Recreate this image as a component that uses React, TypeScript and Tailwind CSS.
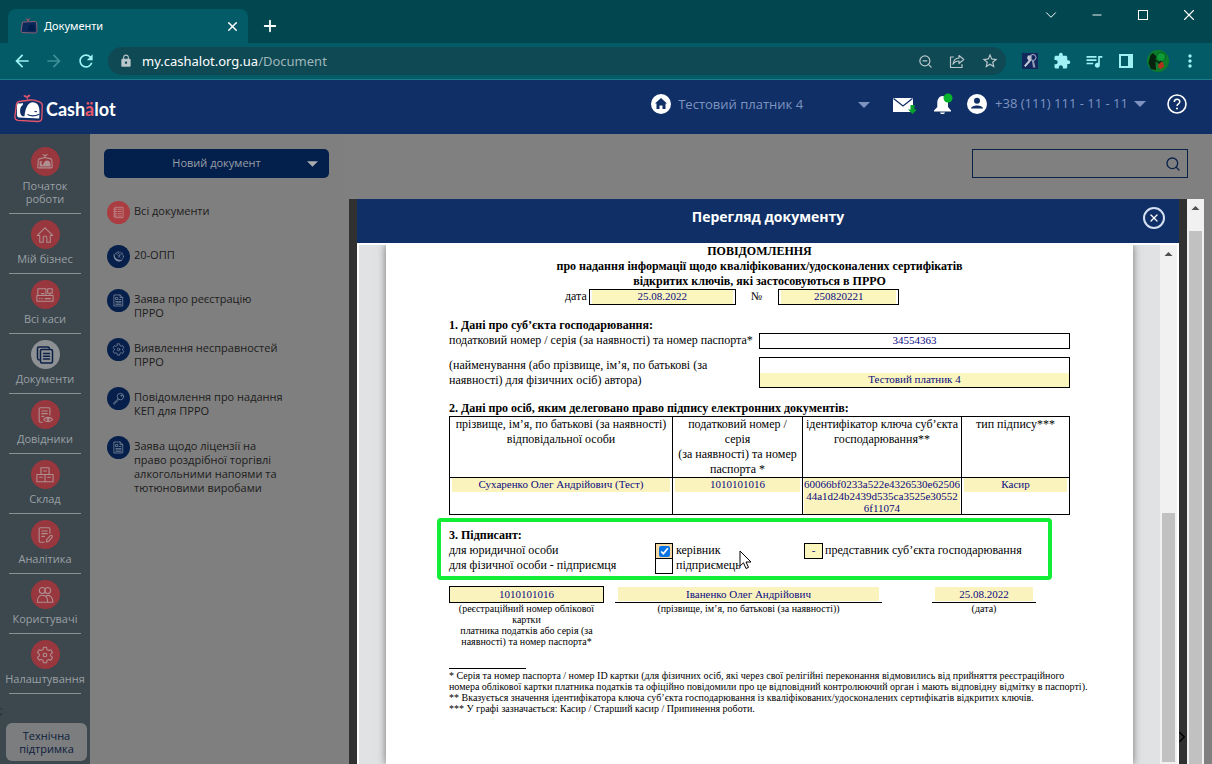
import React from "react";
import { Search, X, Plus, Minus, ChevronDown, ChevronRight, ZoomOut } from "lucide-react";
import {
  MdArrowBack,
  MdArrowForward,
  MdRefresh,
  MdExtension,
  MdQueueMusic,
  MdMoreVert,
  MdLock,
  MdStarBorder,
} from "react-icons/md";

type IconProps = { className?: string };

const line = {
  fill: "none",
  stroke: "currentColor",
  strokeWidth: 1.2,
  strokeLinecap: "round" as const,
  strokeLinejoin: "round" as const,
};

function WhaleMark({ className }: IconProps) {
  return (
    <svg viewBox="0 0 30 30" className={className} aria-hidden="true">
      <path
        d="M5 7.500Q2.800 7.800 2.500 10L.9 22.500Q.7 26 4 26.300L24 27.500Q27.500 27.600 27.800 24.500L28.300 11.500Q28.200 8.700 25.500 7.800L21 6.300Q19 5.700 16.500 6Z"
        fill="none"
        stroke="#e8566b"
        strokeWidth="1.300"
      />
      <path d="M12.800 5.800C13 4.500 12.900 4 12.600 3.400C11.300 3.600 9.800 2.900 9.400 1.500C11.200 1 12.500 1.600 13 2.600C13.300 1.200 14.500.3 16.300.8C16.200 2.500 15 3.300 13.900 3.400L13.800 5.800Z" fill="#e8566b" />
      <path
        d="M3 13C3.200 11 3 9.300 4.400 9.200C5.700 9.800 7 9.600 8.300 9C9.500 9 9 11.500 7.400 12.200C6 14 5.800 17 6.500 20C7.600 22.500 9.500 22.600 10.500 22C11.500 13 14.500 8.500 18.500 8.300C23.500 8.500 25.500 12 25.500 17.500L25.200 24.500L5 23.500Q3 23.400 2.900 21Z"
        fill="#ffffff"
      />
      <path d="M13.500 20.500C17 22.500 22 21.800 25.300 20.300M20.500 17.500L23 17.700" fill="none" stroke="#0f2f66" strokeWidth="1.100" />
    </svg>
  );
}

function WhaleSmall({ className }: IconProps) {
  return (
    <svg viewBox="0 0 20 20" className={className} aria-hidden="true">
      <g {...line}>
        <path d="M3.500 6.500L10 5L16.500 6.500Q17.500 7 17.600 8L18 15Q18 16.500 16.500 16.500H3Q1.800 16.500 2 15L2.500 8Q2.600 6.800 3.500 6.500Z" />
        <path d="M10 4.800V3M10 3L7.800 1.800M10 3L12.300 1.600" />
      </g>
      <path d="M4 15V9.500L6.500 8.500L6 11.500L7.500 14C8.500 10 10 8.200 12.500 8.200C15.500 8.500 16.300 11 16.300 15Z" fill="currentColor" />
    </svg>
  );
}

function HomeLine({ className }: IconProps) {
  return (
    <svg viewBox="0 0 20 20" className={className} aria-hidden="true">
      <path {...line} d="M1.500 10.500L10 2L18.500 10.500H15.800V18H12V13C12 10.500 8 10.500 8 13V18H4.200V10.500Z" />
    </svg>
  );
}

function CashDesk({ className }: IconProps) {
  return (
    <svg viewBox="0 0 20 20" className={className} aria-hidden="true">
      <path {...line} d="M2 3H11V10.500H2ZM13 3H18V8H13ZM15.500 8V10.500M1 10.500H19V17H1ZM6 8.500H9M4 14H4.500M6.500 14H7M10 14H16" />
    </svg>
  );
}

function DocsStack({ className }: IconProps) {
  return (
    <svg viewBox="0 0 20 20" className={className} aria-hidden="true">
      <path {...line} strokeWidth={1.5} d="M4 15C2.800 14.500 2.500 14 2.500 13V3.500C2.500 2.500 3 2 4 2H12.500C13.500 2 14 2.500 14.300 3M6.500 4.500H16C17 4.500 17.500 5 17.500 6V16.500C17.500 17.500 17 18 16 18H7C6 18 5.500 17.500 5.500 16.500V5.500C5.500 5 6 4.500 6.500 4.500ZM8.500 8.500H14.500M8.500 11.300H14.500M8.500 14H14.500" />
    </svg>
  );
}

function DocEye({ className }: IconProps) {
  return (
    <svg viewBox="0 0 20 20" className={className} aria-hidden="true">
      <path {...line} d="M15.500 10V3.500C15.500 2.500 15 2 14 2H5C4 2 3.500 2.500 3.500 3.500V16.500C3.500 17.500 4 18 5 18H7M6.500 5.500H12.500M6.500 8.500H12.500M6.500 11.500H8.500M8.500 15C10.500 11.800 16 11.800 18.500 15C16 18.200 10.500 18.200 8.500 15Z" />
      <circle {...line} cx="13.500" cy="15" r="1" />
    </svg>
  );
}

function Boxes({ className }: IconProps) {
  return (
    <svg viewBox="0 0 20 20" className={className} aria-hidden="true">
      <path {...line} d="M5.500 2H14.500V9.500H5.500ZM1 9.500H10V17.500H1ZM10 9.500H19V17.500H10ZM8.500 5.500H11.500M4 12.500H7M13 12.500H16" />
    </svg>
  );
}

function DocPen({ className }: IconProps) {
  return (
    <svg viewBox="0 0 20 20" className={className} aria-hidden="true">
      <path {...line} d="M15.500 8V3.500C15.500 2.500 15 2 14 2H5C4 2 3.500 2.500 3.500 3.500V16.500C3.500 17.500 4 18 5 18H9M6.500 5.500H12.500M6.500 8.500H12.500M6.500 11.500H9.500M11.500 17.800L12 14.800L16.300 10.500C17.500 9.800 18.800 11.300 18 12.400L14 17Z" />
    </svg>
  );
}

function Users({ className }: IconProps) {
  return (
    <svg viewBox="0 0 20 20" className={className} aria-hidden="true">
      <g {...line}>
        <circle cx="7" cy="5" r="3.300" />
        <circle cx="13" cy="5" r="3.300" />
        <path d="M1.500 18C1.500 13 3.500 10.300 7 10.300C11 10.300 13 13 13 18ZM11 11C15.500 9 18.800 12.500 18.800 18H13" />
      </g>
    </svg>
  );
}

function Gear({ className }: IconProps) {
  return (
    <svg viewBox="0 0 20 20" className={className} aria-hidden="true">
      <path {...line} d="M8.300 1.300H11.700L12.200 4L14 5L16.500 4.100L18.300 7.300L16.300 9V11L18.300 12.700L16.500 15.900L14 15L12.200 16L11.700 18.700H8.300L7.800 16L6 15L3.500 15.900L1.700 12.700L3.700 11V9L1.700 7.300L3.500 4.100L6 5L7.800 4Z" />
      <circle {...line} cx="10" cy="10" r="2" />
    </svg>
  );
}

function FormList({ className }: IconProps) {
  return (
    <svg viewBox="0 0 20 20" className={className} aria-hidden="true">
      <path {...line} d="M5 2H17V18H5ZM2.500 5H7M2.500 8.500H7M2.500 12H7M2.500 15.500H7M9 5H14.500M9 8.500H14.500M9 12H14.500M9 15.500H14.500" />
    </svg>
  );
}

function Globe({ className }: IconProps) {
  return (
    <svg viewBox="0 0 20 20" className={className} aria-hidden="true">
      <circle {...line} strokeWidth={1} cx="10.500" cy="10" r="7" />
      <path d="M3 5C3.500 12 8 14.500 11 15L16 15.500C13 18 10 18 8 17C3.500 15.500 1.500 10 3 5Z" fill="currentColor" />
      <path {...line} strokeWidth={1} d="M6 5L13 12M9 3.500L12 8L16 5M12 8L10 11" />
    </svg>
  );
}

function DocForm({ className }: IconProps) {
  return (
    <svg viewBox="0 0 20 20" className={className} aria-hidden="true">
      <path {...line} d="M3.500 1.500H12.500L16.500 5.500V18.500H3.500ZM12.500 1.500V5.500H16.500M6 5.500H9V8.500H6ZM6 11.500H14M6 13.700H14M6 16H14M11 8.500H14" />
    </svg>
  );
}

function KeyLine({ className }: IconProps) {
  return (
    <svg viewBox="0 0 20 20" className={className} aria-hidden="true">
      <circle {...line} cx="13" cy="7" r="5" />
      <circle {...line} cx="14.500" cy="5.500" r="1" />
      <path {...line} d="M9.300 10.500L2 17.500L3 19L5.500 17L5.500 15.500L7.200 15.200L10.800 11.600" />
    </svg>
  );
}

const sections = [
  { label: "Початок роботи", Icon: WhaleSmall },
  { label: "Мій бізнес", Icon: HomeLine },
  { label: "Всі каси", Icon: CashDesk },
  { label: "Документи", Icon: DocsStack, active: true },
  { label: "Довідники", Icon: DocEye },
  { label: "Склад", Icon: Boxes },
  { label: "Аналітика", Icon: DocPen },
  { label: "Користувачі", Icon: Users },
  { label: "Налаштування", Icon: Gear },
];

const documentKinds = [
  { label: "Всі документи", Icon: FormList, active: true },
  { label: "20-ОПП", Icon: Globe },
  { label: "Заява про реєстрацію\nПРРО", Icon: DocForm },
  { label: "Виявлення несправностей\nПРРО", Icon: Gear },
  { label: "Повідомлення про надання\nКЕП для ПРРО", Icon: KeyLine },
  { label: "Заява щодо ліцензії на\nправо роздрібної торгівлі\nалкогольними напоями та\nтютюновими виробами", Icon: DocForm },
];

function Caret({ className }: IconProps) {
  return (
    <svg viewBox="0 0 12 6" className={className} aria-hidden="true">
      <path d="M0 0H12L6 6Z" fill="currentColor" />
    </svg>
  );
}

function ToolbarSlot({ label, children }: { label: string; children: React.ReactNode }) {
  return (
    <button aria-label={label} className="flex w-8 justify-center">
      {children}
    </button>
  );
}

function BrowserChrome() {
  return (
    <div className="shrink-0 font-['Noto_Sans','Open_Sans',sans-serif]">
      <div className="flex h-[43px] items-end bg-[#024750] pl-2">
        <div className="flex h-[34px] w-60 items-center rounded-t-lg bg-[#025b67] pr-2 pl-3">
          <svg viewBox="0 0 18 16" className="h-4 w-[18px]" aria-hidden="true">
            <path d="M2.500 4L15 3.500Q16.500 3.700 16.600 5L17 13Q17 15 15 15L3 14.600Q1 14.500 1.100 12.800Z" fill="#0a2a5c" stroke="#8f5f78" strokeWidth="1" />
            <path d="M8 3.500V2L6 .8M8 2L10 .8" fill="none" stroke="#b5566a" strokeWidth="1" />
            <path d="M7.500 13C8 9 9 6.500 12 6.500C14.500 7 15 9.500 14.800 13Z" fill="#041f4c" />
          </svg>
          <span className="ml-[6px] flex-1 text-[11px] text-white">Документи</span>
          <button aria-label="Закрити вкладку" className="text-white">
            <X className="size-[15px]" strokeWidth={2.4} />
          </button>
        </div>
        <button aria-label="Нова вкладка" className="mb-2 ml-[13px] text-white">
          <Plus className="size-[18px]" strokeWidth={2.4} />
        </button>
        <div className="ml-auto flex items-center self-start pt-[6px] text-white">
          <button aria-label="Пошук вкладок" className="flex w-[46px] justify-center">
            <ChevronDown className="size-[18px]" strokeWidth={1.3} />
          </button>
          <button aria-label="Згорнути" className="flex w-[46px] justify-center">
            <Minus className="size-[14px]" strokeWidth={1.6} />
          </button>
          <button aria-label="Розгорнути" className="flex w-[46px] justify-center">
            <span className="size-[10px] border border-white" />
          </button>
          <button aria-label="Закрити" className="flex w-[46px] justify-center">
            <X className="size-[18px]" strokeWidth={1.5} />
          </button>
        </div>
      </div>
      <div className="flex h-9 items-center bg-[#025b67] pr-[6px] pl-3 text-[#9ff1f5]">
        <button aria-label="Назад">
          <MdArrowBack className="size-5" />
        </button>
        <button aria-label="Вперед" className="ml-3 text-[#3f8f98]">
          <MdArrowForward className="size-5" />
        </button>
        <button aria-label="Оновити" className="ml-3">
          <MdRefresh className="size-5" />
        </button>
        <div className="ml-3 flex h-7 flex-1 items-center rounded-full bg-[#0f4954] pr-[7px] pl-[11px] text-[#b9c6ca]">
          <MdLock className="size-[14px]" />
          <span className="ml-[9px] flex-1 pt-px text-[13px] text-[#9fb6bb]">
            <span className="text-white">my.cashalot.org.ua</span>/Document
          </span>
          <span className="flex items-center gap-4">
            <ZoomOut className="size-[15px]" strokeWidth={2} />
            <svg viewBox="0 0 16 16" className="size-4" aria-hidden="true">
              <path {...line} d="M4.500 4H1.500V14.500H13V11.500" />
              <path {...line} d="M10 2.500L14.800 6.500L10 10.500V8C7 8 5.300 9 4 11.200C4.500 7.500 6.500 5.200 10 5Z" />
            </svg>
            <MdStarBorder className="size-[18px]" />
          </span>
        </div>
        <div className="ml-2 flex items-center">
          <ToolbarSlot label="Підпис">
            <svg viewBox="0 0 16 16" className="size-4" aria-hidden="true">
              <rect width="16" height="16" fill="#12285c" />
              <path d="M6 2.500H9.500V7L8 9L3.500 14L2 12.800L6.500 7.500L5 5Z" fill="#c4c9d4" />
              <circle cx="11" cy="4.500" r="3" fill="none" stroke="#aab2c6" />
              <path d="M10 8L11 14.500H13.500L12 8Z" fill="#8f9ab3" />
            </svg>
          </ToolbarSlot>
          <ToolbarSlot label="Розширення">
            <MdExtension className="size-[18px]" />
          </ToolbarSlot>
          <ToolbarSlot label="Медіа">
            <MdQueueMusic className="size-5" />
          </ToolbarSlot>
          <ToolbarSlot label="Бічна панель">
            <svg viewBox="0 0 14 14" className="size-[14px]" aria-hidden="true">
              <path d="M1 1H13V13H1Z" fill="none" stroke="currentColor" strokeWidth="2" />
              <path d="M9 1H13V13H9Z" fill="currentColor" />
            </svg>
          </ToolbarSlot>
          <ToolbarSlot label="Профіль">
            <svg viewBox="0 0 22 22" className="size-[22px]" aria-hidden="true">
              <circle cx="11" cy="11" r="11" fill="#0b7d2b" />
              <path d="M3.500 5L6 3L9 6L8.500 12L9 20L4 19L1.500 13Z" fill="#07220f" />
              <circle cx="14" cy="7" r="4.500" fill="#0f9a38" stroke="#075c1e" />
              <path d="M12 12H16L17 17L13.500 19L11 17Z" fill="#b4321c" />
              <path d="M8 10L12 13L14 11" fill="none" stroke="#07220f" strokeWidth="1.500" />
            </svg>
          </ToolbarSlot>
          <ToolbarSlot label="Меню">
            <MdMoreVert className="size-5" />
          </ToolbarSlot>
        </div>
      </div>
      <div className="h-px bg-[#1c7c8c]" />
    </div>
  );
}

function AppHeader() {
  return (
    <header className="flex h-[54px] shrink-0 items-start bg-[#0f2f66] pr-[25px] pl-[14px] text-[#7f93c0]">
      <a href="#" className="flex items-center pt-[13px] text-white">
        <WhaleMark className="size-[30px]" />
        <span className="ml-[2px] pt-px font-['Lato',sans-serif] text-[18px] leading-[30px] font-bold">
          Cash<span className="text-[#e8566b]">ä</span>lot
        </span>
      </a>
      <div className="ml-auto flex h-12 items-center">
        <button className="flex items-center text-[13px]">
          <svg viewBox="0 0 20 20" className="size-5" aria-hidden="true">
            <circle cx="10" cy="10" r="10" fill="#fff" />
            <path d="M10 4L16 9.500H14.500V15H11.500V11.500H8.500V15H5.500V9.500H4Z" fill="#0f2f66" />
          </svg>
          <span className="mr-[55px] ml-[7px] pt-[2px]">Тестовий платник 4</span>
          <Caret className="mt-[2px] h-[6px] w-3" />
        </button>
        <button aria-label="Повідомлення" className="ml-[23px]">
          <svg viewBox="0 0 24 20" className="h-5 w-6" aria-hidden="true">
            <path d="M0 4H20V18H0Z" fill="#fff" />
            <path d="M.5 4.500L10 12L19.500 4.500" fill="none" stroke="#0f2f66" strokeWidth="1.300" />
            <path d="M17.500 11H21.500V15.500H24L19.500 20L15 15.500H17.500Z" fill="#06a02c" />
          </svg>
        </button>
        <button aria-label="Сповіщення" className="ml-4">
          <svg viewBox="0 0 20 22" className="h-[22px] w-5" aria-hidden="true">
            <path d="M9.500 3C5.500 3.500 4.300 6.500 4.300 10V14L1 17.500V18.500H18V17.500L15 14V10C15 6.500 13.500 3.500 9.500 3ZM7 19.500H12C11.500 21.500 7.500 21.500 7 19.500Z" fill="#fff" />
            <circle cx="15" cy="5" r="4.500" fill="#06b32c" />
          </svg>
        </button>
        <button className="ml-[14px] flex items-center text-[13px]">
          <svg viewBox="0 0 20 20" className="size-5" aria-hidden="true">
            <circle cx="10" cy="10" r="10" fill="#fff" />
            <circle cx="10" cy="6.800" r="3" fill="#0f2f66" />
            <path d="M4 14.500C4.500 10.500 15.500 10.500 16 14.500Z" fill="#0f2f66" />
          </svg>
          <span className="mr-[6px] ml-2 pb-px">+38 (111) 111 - 11 - 11</span>
          <Caret className="h-[6px] w-3" />
        </button>
        <button aria-label="Довідка" className="ml-[21px]">
          <svg viewBox="0 0 20 20" className="size-5 text-white" aria-hidden="true">
            <circle cx="10" cy="10" r="9" fill="none" stroke="currentColor" strokeWidth="1.600" />
            <path d="M7.300 8C7.300 4.500 12.800 4.500 12.800 7.800C12.800 9.800 10 9.800 10 12" fill="none" stroke="currentColor" strokeWidth="1.500" />
            <circle cx="10" cy="14.500" r="1" fill="currentColor" />
          </svg>
        </button>
      </div>
    </header>
  );
}

function SideRail() {
  return (
    <nav className="flex w-[90px] shrink-0 flex-col bg-[#3c474e] text-[11px] leading-[13px] text-[#9aa1a5]">
      <div className="flex flex-col pt-[7px]">
        {sections.map(({ label, Icon, active }) => (
          <a
            key={label}
            href="#"
            className="mx-[9px] flex flex-col items-center border-b border-[#8b9296] pt-[6px] pb-2 text-center"
          >
            <span
              className={
                active
                  ? "flex size-[29px] items-center justify-center rounded-full bg-[#8d9194] text-[#0b1f45]"
                  : "flex size-[29px] items-center justify-center rounded-full bg-[#98373d] text-[#b08f91]"
              }
            >
              <Icon className={active ? "size-5" : "size-[18px]"} />
            </span>
            <span className="mt-[3px]">{label}</span>
          </a>
        ))}
      </div>
      <span className="mt-[10px] text-[10px] text-[#1d2429]">;</span>
      <button className="mx-[3px] mt-auto mb-[3px] ml-[6px] rounded-md bg-[#7b7d7f] px-2 py-[6px] leading-[13px] text-[#0d1c3a]">
        Технічна підтримка
      </button>
    </nav>
  );
}

function DocumentMenu() {
  return (
    <aside className="w-[253px] shrink-0 bg-[#7f7f7f] pt-[15px] pr-[14px] pl-[14px] text-[11px]">
      <button className="flex h-[29px] w-full items-center rounded-[5px] bg-[#031f4b] pr-[11px] pl-[22px] text-[#9a9fa8]">
        <span className="flex-1">Новий документ</span>
        <Caret className="h-[6px] w-[11px] text-[#a9abaf]" />
      </button>
      <ul className="mt-[23px] flex flex-col gap-[18px] pl-[3px] leading-[14px]">
        {documentKinds.map(({ label, Icon, active }) => (
          <li key={label}>
            <a href="#" className="flex min-h-[26px] items-start gap-1 text-[#1c1c1c]">
              <span
                className={
                  active
                    ? "flex size-[23px] shrink-0 items-center justify-center rounded-full bg-[#ab3d42] text-[#c08f91]"
                    : "flex size-[23px] shrink-0 items-center justify-center rounded-full bg-[#06204b] text-[#7c879b]"
                }
              >
                <Icon className="size-[13px]" />
              </span>
              <span className="pt-[3px] whitespace-pre-line">{label}</span>
            </a>
          </li>
        ))}
      </ul>
    </aside>
  );
}

function ScrollArrow() {
  return (
    <svg viewBox="0 0 17 17" className="size-[17px] shrink-0 text-[#505050]" aria-hidden="true">
      <path d="M4.500 11L8.500 7L12.500 11Z" fill="currentColor" />
    </svg>
  );
}

function DocumentPage() {
  return (
    <article className="relative flex-1 bg-white px-[63px] font-['Liberation_Serif',serif] text-[12px] leading-[15px] text-black shadow-[0_0_8px_rgba(0,0,0,0.5)]">
      <h2 className="-mt-px px-[100px] text-center font-bold">
        ПОВІДОМЛЕННЯ
        <br />
        про надання інформації щодо кваліфікованих/удосконалених сертифікатів
        <br />
        відкритих ключів, які застосовуються в ПРРО
      </h2>
      <div className="flex h-4 justify-start pl-[116px]">
        <label htmlFor="doc-date">дата</label>
        <input id="doc-date" readOnly value="25.08.2022" className="ml-[2px] h-4 w-[147px] border border-black bg-[#faf6bd] pb-[2px] text-center text-[11px] text-[#0a0a82] shadow-[inset_2px_0_white,inset_-2px_0_white]" />
        <label htmlFor="doc-number" className="ml-[15px]">№</label>
        <input id="doc-number" readOnly value="250820221" className="ml-4 h-4 w-[121px] border border-black bg-[#faf6bd] pb-[2px] text-center text-[11px] text-[#0a0a82] shadow-[inset_2px_0_white,inset_-2px_0_white]" />
      </div>

      <h3 className="mt-[13px] font-bold">1. Дані про суб’єкта господарювання:</h3>
      <div className="flex h-4 justify-between">
        <label htmlFor="doc-tax">податковий номер / серія (за наявності) та номер паспорта*</label>
        <input id="doc-tax" readOnly value="34554363" className="h-4 w-[311px] border border-black pb-[2px] text-center text-[11px] text-[#0a0a82]" />
      </div>
      <div className="mt-2 flex h-[31px] justify-between">
        <label htmlFor="doc-name" className="max-w-[270px] pt-px">
          (найменування (або прізвище, ім’я, по батькові (за наявності) для фізичних осіб) автора)
        </label>
        <div className="flex w-[311px] items-end border border-black">
          <input id="doc-name" readOnly value="Тестовий платник 4" className="h-[14px] w-full bg-[#faf6bd] pb-[2px] text-center text-[11px] text-[#0a0a82]" />
        </div>
      </div>

      <h3 className="mt-[13px] font-bold">2. Дані про осіб, яким делеговано право підпису електронних документів:</h3>
      <table className="w-full table-fixed border-collapse text-center">
        <colgroup>
          <col className="w-[223px]" />
          <col className="w-[130px]" />
          <col className="w-[159px]" />
          <col />
        </colgroup>
        <thead>
          <tr className="h-[61px] align-top">
            <th className="border border-black p-0 font-normal">прізвище, ім’я, по батькові (за наявності) відповідальної особи</th>
            <th className="border border-black p-0 px-[3px] font-normal">
              податковий номер / серія
              <br />
              (за наявності) та номер паспорта *
            </th>
            <th className="border border-black p-0 font-normal">ідентифікатор ключа суб’єкта господарювання**</th>
            <th className="border border-black p-0 font-normal">тип підпису***</th>
          </tr>
        </thead>
        <tbody className="text-[11px] leading-[12px] text-[#0a0a82]">
          <tr className="h-[37px] align-top">
            <td className="border border-black p-0 px-[2px]">
              <div className="bg-[#fbf3bd] pb-[2px]">Сухаренко Олег Андрійович (Тест)</div>
            </td>
            <td className="border border-black p-0 px-[2px]">
              <div className="bg-[#fbf3bd] pb-[2px]">1010101016</div>
            </td>
            <td className="border border-black p-0 px-px">
              <div className="bg-[#fbf3bd]">
                60066bf0233a522e4326530e62506
                <br />
                44a1d24b2439d535ca3525e30552
                <br />
                6f11074
              </div>
            </td>
            <td className="border border-black p-0 px-[2px]">
              <div className="bg-[#fbf3bd] pb-[2px]">Касир</div>
            </td>
          </tr>
        </tbody>
      </table>

      <section className="relative mt-[13px]">
        <div className="pointer-events-none absolute -top-[10px] right-[18px] -left-3 h-[62px] rounded-[4px] border-4 border-[#12ee35]" />
        <h3 className="font-bold">3. Підписант:</h3>
        <div className="grid grid-cols-[206px_149px_1fr]">
          <div>
            <div>для юридичної особи</div>
            <div>для фізичної особи - підприємця</div>
          </div>
          <div>
            <label className="flex h-[15px]">
              <span className="flex h-4 w-[18px] shrink-0 items-center justify-center border border-black bg-[#f6d9a4]">
                <input type="checkbox" defaultChecked className="size-[11px] accent-[#0b74e5]" />
              </span>
              <span className="ml-[3px]">керівник</span>
            </label>
            <label className="flex h-[15px]">
              <input type="checkbox" className="h-4 w-[18px] shrink-0 appearance-none border border-black" />
              <span className="ml-[3px]">підприємець</span>
            </label>
          </div>
          <div className="flex">
            <input aria-label="представник" readOnly value="-" className="h-4 w-[19px] border border-black bg-[#faf6bd] pb-[2px] text-center text-[11px] text-[#0a0a82]" />
            <span className="ml-[2px]">представник суб’єкта господарювання</span>
          </div>
        </div>
        <svg viewBox="0 0 13 20" className="absolute top-[22px] left-[290px] h-5 w-[13px]" aria-hidden="true">
          <path d="M1 1V16L4.500 12.800L7 18.500L9.500 17.400L7 12H12Z" fill="#fff" stroke="#000" strokeWidth="1" />
        </svg>
      </section>

      <div className="mt-[13px] flex items-start text-center text-[10px] leading-[11px]">
        <div className="w-[155px]">
          <input aria-label="реєстраційний номер" readOnly value="1010101016" className="block h-[17px] w-full border border-black bg-[#fbf3bd] pb-[2px] text-center text-[11px] text-[#0a0a82]" />
          (реєстраційний номер облікової картки
          <br />
          платника податків або серія (за наявності) та номер паспорта*
        </div>
        <div className="ml-[11px] w-[267px]">
          <div className="border-b border-black px-[3px] py-px">
            <input aria-label="прізвище, ім’я, по батькові" readOnly value="Іваненко Олег Андрійович" className="block h-[14px] w-full bg-[#fbf3bd] pb-px text-center text-[11px] text-[#0a0a82]" />
          </div>
          (прізвище, ім’я, по батькові (за наявності))
        </div>
        <div className="ml-[50px] w-[104px]">
          <div className="border-b border-black px-[3px] py-px">
            <input aria-label="дата" readOnly value="25.08.2022" className="block h-[14px] w-full bg-[#fbf3bd] pb-px text-center text-[11px] text-[#0a0a82]" />
          </div>
          (дата)
        </div>
      </div>

      <footer className="-mr-10 mt-[21px] text-[10px] leading-[11px]">
        <hr className="mb-px w-[77px] border-black" />
        <p>
          * Серія та номер паспорта / номер ID картки (для фізичних осіб, які через свої релігійні переконання відмовились від прийняття реєстраційного
          <br />
          номера облікової картки платника податків та офіційно повідомили про це відповідний контролюючий орган і мають відповідну відмітку в паспорті).
        </p>
        <p>** Вказується значення ідентифікатора ключа суб’єкта господарювання із кваліфікованих/удосконалених сертифікатів відкритих ключів.</p>
        <p>*** У графі зазначається: Касир / Старший касир / Припинення роботи.</p>
      </footer>
    </article>
  );
}

function DocumentDialog() {
  return (
    <div className="flex min-h-0 flex-1">
      <div role="dialog" aria-label="Перегляд документу" className="relative flex min-w-0 flex-1 flex-col border-x-8 border-[#313131] bg-white">
        <div className="flex h-11 shrink-0 items-center bg-[#0f2f66] pr-[14px] pb-[6px] pl-9 text-white">
          <h1 className="flex-1 pb-1 text-center text-[14px] font-bold">Перегляд документу</h1>
          <button aria-label="Закрити" className="flex size-[22px] items-center justify-center rounded-full border-2 border-[#d5e0f2]">
            <X className="size-3" strokeWidth={2.6} />
          </button>
        </div>
        <div className="mx-[2px] mt-[2px] flex min-h-0 flex-1 overflow-hidden bg-[#e0e2e3]">
          <div className="flex min-w-0 flex-1 overflow-hidden px-[27px]">
            <DocumentPage />
          </div>
          <div className="flex w-[17px] shrink-0 flex-col bg-[#f1f1f1]">
            <ScrollArrow />
            <div className="mx-[2px] mt-auto mb-[2px] h-[249px] bg-[#c1c1c1]" />
          </div>
        </div>
        <ChevronRight className="absolute -right-3 bottom-[18px] size-[18px] text-black" strokeWidth={2} />
      </div>
      <div className="flex w-[17px] shrink-0 flex-col bg-[#f1f1f1]">
        <ScrollArrow />
        <div className="mx-[2px] mt-[15px] flex-1 bg-[#c1c1c1]" />
      </div>
    </div>
  );
}

export default function App() {
  return (
    <div className="flex h-screen flex-col overflow-hidden bg-[#7f7f7f] font-['Open_Sans','Noto_Sans',sans-serif]">
      <BrowserChrome />
      <AppHeader />
      <div className="flex min-h-0 flex-1">
        <SideRail />
        <DocumentMenu />
        <main className="flex min-w-0 flex-1 flex-col bg-[#808080] pr-2 pl-[6px]">
          <div className="flex h-[65px] shrink-0 justify-end pt-[15px] pr-4">
            <label className="flex h-[29px] w-[216px] items-center border border-[#0b2248] pr-[6px]">
              <input aria-label="Пошук" className="min-w-0 flex-1 px-2 text-[12px] outline-none" />
              <Search className="size-4 text-[#0b2248]" strokeWidth={2} />
            </label>
          </div>
          <DocumentDialog />
        </main>
      </div>
    </div>
  );
}
